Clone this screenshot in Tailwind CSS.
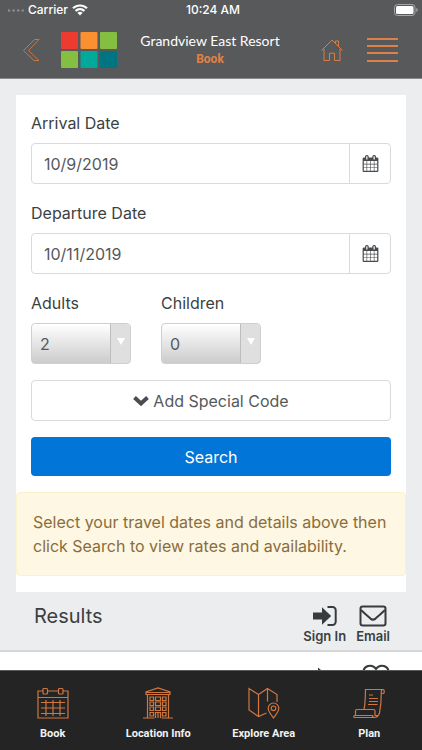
<!DOCTYPE html>
<html lang="en">
<head>
<meta charset="utf-8">
<meta name="viewport" content="width=device-width, initial-scale=1">
<title>Grandview East Resort – Book</title>
<script src="https://cdn.jsdelivr.net/npm/@tailwindcss/browser@4"></script>
</head>
<body class="flex h-dvh flex-col overflow-hidden bg-[#ecedef] font-[Inter,sans-serif] text-[#3b3f42]">

<svg class="hidden" aria-hidden="true">
  <symbol id="calendar" viewBox="0 0 1792 1792">
    <path d="M192 1664h288v-288h-288v288zm352 0h320v-288h-320v288zm-352-352h288v-320h-288v320zm352 0h320v-320h-320v320zm-352-384h288v-288h-288v288zm736 736h320v-288h-320v288zm-384-736h320v-288h-320v288zm768 736h288v-288h-288v288zm-384-352h320v-320h-320v320zm-352-864v-288q0-13-9.5-22.5t-22.5-9.5h-64q-13 0-22.5 9.5t-9.5 22.5v288q0 13 9.5 22.5t22.5 9.5h64q13 0 22.5-9.5t9.5-22.5zm736 864h288v-320h-288v320zm-384-384h320v-288h-320v288zm384 0h288v-288h-288v288zm32-480v-288q0-13-9.5-22.5t-22.5-9.5h-64q-13 0-22.5 9.5t-9.5 22.5v288q0 13 9.5 22.5t22.5 9.5h64q13 0 22.5-9.5t9.5-22.5zm384-64v1280q0 52-38 90t-90 38h-1408q-52 0-90-38t-38-90v-1280q0-52 38-90t90-38h128v-96q0-66 47-113t113-47h64q66 0 113 47t47 113v96h384v-96q0-66 47-113t113-47h64q66 0 113 47t47 113v96h128q52 0 90 38t38 90z"/>
  </symbol>
</svg>

<header class="shrink-0 border-b border-[#8b8c8d] bg-[#58595b] text-white">
  <div class="grid h-5 grid-cols-3 items-center pr-1 pl-2 text-xs font-medium">
    <div class="flex items-center gap-1">
      <svg class="h-1 w-4 fill-[#8b8c8d]" viewBox="0 0 16 4"><circle cx="1" cy="2.500" r="1.300"/><circle cx="5.600" cy="2.500" r="1.300"/><circle cx="10.200" cy="2.500" r="1.300"/><circle cx="14.700" cy="2.500" r="1.300"/></svg>
      <span>Carrier</span>
      <svg class="h-3 w-4" viewBox="0 0 16 12" fill="#fff"><path d="M8 .4c3 0 5.700 1.200 7.700 3.100L14.200 5C12.600 3.500 10.400 2.500 8 2.500S3.400 3.500 1.800 5L.3 3.500C2.300 1.600 5 .4 8 .4z"/><path d="M8 4.100c2 0 3.800.8 5.100 2.100l-1.500 1.500C10.700 6.800 9.400 6.200 8 6.200s-2.700.6-3.600 1.500L2.900 6.200C4.200 4.900 6 4.100 8 4.100z"/><path d="M8 7.700c1 0 1.900.4 2.600 1L8 11.500 5.400 8.700c.7-.6 1.600-1 2.600-1z"/></svg>
    </div>
    <div class="text-center">10:24 AM</div>
    <svg class="h-3 w-6 justify-self-end" viewBox="0 0 24 12"><rect x=".5" y=".5" width="20.500" height="11" rx="3" fill="none" stroke="#a5a6a7"/><rect x="2" y="2" width="17.500" height="8" rx="1.500" fill="#fff"/><path d="M22.300 4v4c1-.3 1.500-1.100 1.500-2s-.5-1.700-1.500-2z" fill="#a5a6a7"/></svg>
  </div>
  <div class="grid h-[58px] grid-cols-[1fr_auto_1fr] items-center pt-0.5 pr-6 pl-[22px]">
    <div class="flex items-center gap-5">
      <a href="#back" aria-label="Back"><svg class="h-6 w-[18px]" viewBox="0 0 18 24" fill="none" stroke="#c97743" stroke-width="1"><path d="M17 1.500h-4.500L1.500 12.500l10.500 10h5L6.500 12.500z"/></svg></a>
      <svg class="h-[38px] w-[58px]" viewBox="0 0 58 38"><rect x="1" y="1" width="17" height="17" rx="1" fill="#ee3b2f"/><rect x="20.500" y="1" width="17" height="17" rx="1" fill="#fb9030"/><rect x="40" y="1" width="17" height="17" rx="1" fill="#84bf41"/><rect x="1" y="20" width="17" height="17" rx="1" fill="#84bf41"/><rect x="20.500" y="20" width="17" height="17" rx="1" fill="#00a99a"/><rect x="40" y="20" width="17" height="17" rx="1" fill="#007481"/></svg>
    </div>
    <h1 class="text-center font-[Lato,sans-serif] text-sm leading-[18px] whitespace-nowrap">Grandview East Resort<span class="block font-[Roboto,sans-serif] text-xs leading-[18px] font-bold text-[#e08246]">Book</span></h1>
    <div class="flex items-center justify-end gap-6">
      <a href="#home" aria-label="Home"><svg class="h-6 w-[22px]" viewBox="0 0 22 24" fill="none" stroke="#d87d47" stroke-width="1"><path d="M.5 12.500 11 2l10.500 10.500M3 11v11.500h5.500v-7.300h5v7.300H19V11M14.500 5V3h3v5"/></svg></a>
      <button type="button" aria-label="Menu"><svg class="block h-[26px] w-[31px]" viewBox="0 0 31 26" fill="#dd8148"><path d="M0 1h31v2H0zM0 8h31v2H0zM0 15h31v2H0zM0 23h31v2H0z"/></svg></button>
    </div>
  </div>
</header>

<main class="min-h-0 flex-1 overflow-hidden">
  <form class="mx-4 mt-4 bg-white pt-4 pb-4">
    <div class="px-[15px]">
      <label for="arrival" class="mb-2 block leading-6">Arrival Date</label>
      <div class="mb-[17px] flex h-[41px] rounded border border-[#d9dadb] text-[#55595c]">
        <input id="arrival" type="text" value="10/9/2019" class="min-w-0 flex-1 px-3 outline-none">
        <button type="button" aria-label="Choose arrival date" class="flex w-[41px] items-center justify-center border-l border-[#d9dadb]"><svg class="size-[17px] fill-[#484c4f]"><use href="#calendar"/></svg></button>
      </div>
      <label for="departure" class="mb-2 block leading-6">Departure Date</label>
      <div class="mb-[17px] flex h-[41px] rounded border border-[#d9dadb] text-[#55595c]">
        <input id="departure" type="text" value="10/11/2019" class="min-w-0 flex-1 px-3 outline-none">
        <button type="button" aria-label="Choose departure date" class="flex w-[41px] items-center justify-center border-l border-[#d9dadb]"><svg class="size-[17px] fill-[#484c4f]"><use href="#calendar"/></svg></button>
      </div>
      <div class="mb-4 flex gap-[30px]">
        <div class="w-[100px]">
          <label for="adults" class="mb-2 block leading-6">Adults</label>
          <div class="relative">
            <select id="adults" class="block h-[41px] w-full appearance-none rounded border border-[#cfcfcf] bg-linear-to-b from-white to-[#cccccc] px-2 text-[#55595c]"><option>1</option><option selected>2</option><option>3</option></select>
            <span class="pointer-events-none absolute inset-y-px right-px flex w-5 justify-center rounded-r border-l border-[#bdbdbd] bg-[#dfdfdf] pt-[14px]"><svg class="h-2 w-2 fill-white" viewBox="0 0 8 8"><path d="M0 0h8L4 7z"/></svg></span>
          </div>
        </div>
        <div class="w-[100px]">
          <label for="children" class="mb-2 block leading-6">Children</label>
          <div class="relative">
            <select id="children" class="block h-[41px] w-full appearance-none rounded border border-[#cfcfcf] bg-linear-to-b from-white to-[#cccccc] px-2 text-[#55595c]"><option>0</option><option>1</option><option>2</option></select>
            <span class="pointer-events-none absolute inset-y-px right-px flex w-5 justify-center rounded-r border-l border-[#bdbdbd] bg-[#dfdfdf] pt-[14px]"><svg class="h-2 w-2 fill-white" viewBox="0 0 8 8"><path d="M0 0h8L4 7z"/></svg></span>
          </div>
        </div>
      </div>
      <button type="button" class="mb-4 flex h-[41px] w-full items-center justify-center gap-1 rounded border border-[#d9dadb] text-[#55595c]">
        <svg class="h-[10px] w-4" viewBox="0 0 16 10" fill="none" stroke="#494d50" stroke-width="4"><path d="m1.500 1.500 6.500 6 6.500-6"/></svg>
        Add Special Code
      </button>
      <button type="submit" class="mb-4 block h-[39px] w-full rounded bg-[#0275d8] text-white">Search</button>
    </div>
    <p class="rounded border border-[#faf2cc] bg-[#fdf7e3] px-4 py-[17px] leading-6 text-[#8a6d3b]">Select your travel dates and details above then click Search to view rates and availability.</p>
  </form>

  <section class="flex h-[60px] justify-between border-b-2 border-[#d5d6d8] pr-8 pl-[34px]">
    <h2 class="pt-3 text-xl leading-6">Results</h2>
    <div class="flex gap-[10px] pt-3 text-[13px] leading-4 font-semibold">
      <a href="#sign-in" class="flex flex-col items-center">
        <svg class="h-6 w-6" viewBox="0 0 24 24"><path d="M0 8.500h9V3.200l9.200 8.800L9 20.800v-5.300H0z" fill="#373b3e"/><path d="M14.500 3h5a3.200 3.200 0 0 1 3.200 3.200v11.600a3.200 3.200 0 0 1-3.200 3.200h-5" fill="none" stroke="#373b3e" stroke-width="2"/></svg>
        Sign In
      </a>
      <a href="#email" class="flex flex-col items-center">
        <svg class="h-6 w-7" viewBox="0 0 28 24" fill="none" stroke="#373b3e" stroke-width="2"><rect x="1.500" y="2.500" width="25" height="19" rx="2.200"/><path d="M2 6c3.500 3.300 6.500 6 9.500 8.600q2.500 2 5 0c3-2.600 6-5.300 9.500-8.600"/></svg>
        Email
      </a>
    </div>
  </section>
  <section class="flex h-10 justify-end gap-7 bg-white pt-3 pr-8" aria-label="Saved">
    <svg class="h-6 w-6" viewBox="0 0 24 24"><path d="M8 3.500 18 12 8 20z" fill="#373b3e"/></svg>
    <svg class="h-6 w-7" viewBox="0 0 28 24" fill="none" stroke="#373b3e" stroke-width="2"><path d="M14 5C10-1 1 2 1.500 8.500 2 13 10 19 14 23c4-4 12-10 12.500-14.500C27 2 18-1 14 5z"/></svg>
  </section>
</main>

<nav class="grid h-20 shrink-0 grid-cols-4 border-t border-[#58595b] bg-[#242424] font-[Roboto,sans-serif] text-[11px] leading-4 font-bold text-[#f2f2f2]">
  <a href="#book" class="flex flex-col items-center gap-[7px] pt-4">
    <svg class="size-8" viewBox="0 0 32 32" fill="none" stroke="#cf7741" stroke-width="1.200"><path d="M6 4H1v27h30V4h-5M10.500 4h11M1 10.500h30"/><rect x="6" y="1.500" width="4.500" height="5.500" rx="1"/><rect x="21.500" y="1.500" width="4.500" height="5.500" rx="1"/><path d="M4 15.500h24M4 21h24M4 26.500h24M9 13v16M16 13v16M23 13v16"/></svg>
    Book
  </a>
  <a href="#location" class="flex flex-col items-center gap-[7px] pt-4">
    <svg class="size-8" viewBox="0 0 32 32" fill="none" stroke="#cf7741" stroke-width="1.200"><path d="M1 31h11.500M19.500 31H31M5.500 31V8M26.500 31V8M4 7.500V5L16 1l12 4v2.500zM4 5.500h24"/><path d="M8 10h3.500v3.500H8zM13.500 10h5v3.500h-5zM20.500 10H24v3.500h-3.500zM8 15h3.500v3.500H8zM13.500 15h5v3.500h-5zM20.500 15H24v3.500h-3.500zM8 20h3.500v3.500H8zM13.500 20h5v3.500h-5zM20.500 20H24v3.500h-3.500zM8 25.500h3.500V29H8zM20.500 25.500H24V29h-3.500zM13.500 31v-5.500h5V31M16 25.500V31"/></svg>
    Location Info
  </a>
  <a href="#explore" class="flex flex-col items-center gap-[7px] pt-4">
    <svg class="size-8" viewBox="0 0 32 32" fill="none" stroke="#cf7741" stroke-width="1.200"><path d="M18.500 26 10.500 29.500 1 23V1.500l9.500 6 9-6 9.500 6V15M10.500 7.500v22M19.500 1.500v13"/><path d="M25.500 31c-3-4-5.300-6.500-5.300-9.700a5.300 5.300 0 0 1 10.600 0c0 3.200-2.300 5.700-5.300 9.700z"/><circle cx="25.500" cy="21.300" r="2.300"/></svg>
    Explore Area
  </a>
  <a href="#plan" class="flex flex-col items-center gap-[7px] pt-4">
    <svg class="size-8" viewBox="0 0 32 32" fill="none" stroke="#cf7741" stroke-width="1.200"><path d="M11 22.500c1.300-6 1.300-13 1.500-20h18c1 0 1 4 0 4h-2.200V4.500q0-2 2.200-2M28.300 6c0 9-.8 15-1.800 20-1 3-2.500 4.500-5 4.500H1.500c-1 0-1-2 0-2h1V24q0-1.500 1.500-1.500h16.500q1.500 0 1.500 1.500v4.500h2.500M2.500 28.500H19.500q0 2 2 2"/><path d="M16 8h4M16 11.500h9M16 14.500h9M15 17.500h9.500"/></svg>
    Plan
  </a>
</nav>
</body>
</html>
